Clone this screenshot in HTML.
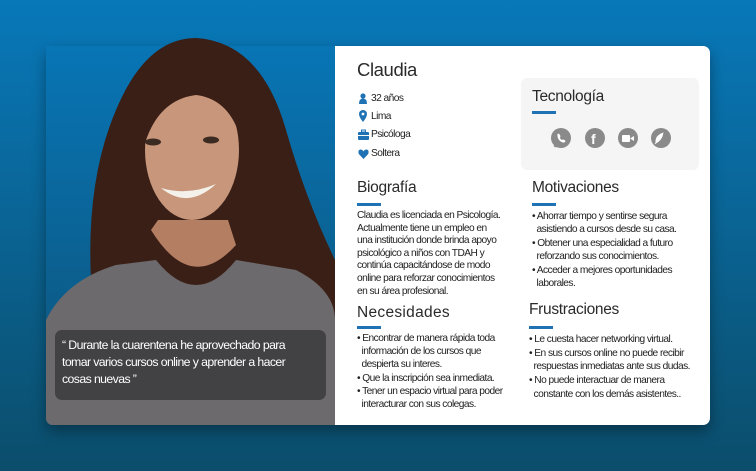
<!DOCTYPE html>
<html><head><meta charset="utf-8"><style>
*{margin:0;padding:0;box-sizing:border-box}
body{width:756px;height:471px;overflow:hidden;font-family:"Liberation Sans",sans-serif;background:linear-gradient(180deg,#0878b9 0%,#0a6596 45%,#0b4d6b 100%);position:relative}
.card{position:absolute;left:46px;top:46px;width:664px;height:379px;border-radius:7px;background:#fff;box-shadow:0 6px 14px rgba(0,0,0,.35)}
.photo{position:absolute;left:46px;top:30px;width:289px;height:395px;overflow:hidden;border-bottom-left-radius:7px}
.t{position:absolute;color:#222;white-space:nowrap;letter-spacing:-.55px}
h2{position:absolute;font-weight:normal;font-size:15.5px;color:#2a2a2a;letter-spacing:-.3px;white-space:nowrap}
.ul{position:absolute;width:24px;height:3px;background:#1f72b3}
.b{font-size:10.2px;line-height:12.6px}
.q{position:absolute;left:55px;top:330px;width:271px;height:70px;border-radius:7px;background:rgba(55,55,58,.8);color:#fff;font-size:12.3px;line-height:17px;padding:7px 0 0 7px;letter-spacing:-.6px}
.ic{position:absolute;width:20px;height:20px;border-radius:50%;background:#8a8a8a;top:128px}
</style></head><body>
<div class="card"></div>
<div class="photo">
<svg width="289" height="395" viewBox="0 0 289 395">
<defs><linearGradient id="bg" x1="0" y1="0" x2="0" y2="1"><stop offset="0" stop-color="#0875b5"/><stop offset=".6" stop-color="#0b6090"/><stop offset="1" stop-color="#0d5477"/></linearGradient></defs>
<rect y="16" width="289" height="379" fill="url(#bg)"/>
<path d="M40 395 L45 250 Q40 150 70 80 Q100 8 150 8 Q215 12 240 100 Q260 170 289 230 L289 395Z" fill="#3a1f17"/>
<path d="M0 395 L0 290 Q20 250 70 235 L110 230 Q150 280 190 230 L250 240 Q289 260 289 290 L289 395Z" fill="#6d6a6d"/>
<path d="M105 200 Q145 265 190 215 L182 190 L112 190Z" fill="#b47e62"/>
<ellipse cx="146" cy="120" rx="47" ry="70" fill="#c8967a"/>
<path d="M97 120 Q100 40 150 38 Q200 42 198 125 Q190 70 150 65 Q110 70 97 120Z" fill="#3a1f17"/>
<ellipse cx="107" cy="112" rx="8" ry="3.5" fill="#3a2a22"/><ellipse cx="165" cy="110" rx="8" ry="3.5" fill="#3a2a22"/>
<path d="M115 158 Q142 180 170 154 Q142 166 115 158Z" fill="#f4f0ea"/>
</svg>
</div>
<div class="q">“ Durante la cuarentena he aprovechado para<br>tomar varios cursos online y aprender a hacer<br>cosas nuevas ”</div>

<div class="t" style="left:357px;top:59px;font-size:18.5px;color:#2a2a2a;letter-spacing:-.4px">Claudia</div>
<svg style="position:absolute;left:358px;top:93px" width="12" height="70">
<circle cx="5" cy="3" r="2.6" fill="#1f72b3"/><path d="M1 11 Q1 5.5 5 5.5 Q9 5.5 9 11Z" fill="#1f72b3"/>
<path d="M5 29 Q1 24 1 21 A4 4 0 0 1 9 21 Q9 24 5 29Z" fill="#1f72b3"/><circle cx="5" cy="21" r="1.4" fill="#fff"/>
<rect x="0" y="39" width="11" height="8" rx="1" fill="#1f72b3"/><rect x="3.5" y="37" width="4" height="2" fill="none" stroke="#1f72b3"/><rect x="0" y="42" width="11" height="1" fill="#fff"/>
<path d="M5.5 66 L0.8 61 Q-0.5 57 2.5 56.5 Q4.5 56.5 5.5 58.5 Q6.5 56.5 8.5 56.5 Q11.5 57 10.2 61Z" fill="#1f72b3"/>
</svg>
<div class="t b" style="left:371px;top:93px">32 años</div>
<div class="t b" style="left:371px;top:111px">Lima</div>
<div class="t b" style="left:371px;top:129px">Psicóloga</div>
<div class="t b" style="left:371px;top:148px">Soltera</div>

<div style="position:absolute;left:521px;top:78px;width:178px;height:92px;background:#f5f5f5;border-radius:6px"></div>
<h2 style="left:532px;top:88px">Tecnología</h2><div class="ul" style="left:532px;top:111px"></div>
<div class="ic" style="left:551px"></div><div class="ic" style="left:585px"></div><div class="ic" style="left:618px"></div><div class="ic" style="left:651px"></div>
<svg style="position:absolute;left:551px;top:128px" width="120" height="22">
<path d="M4 19 L5.5 15" stroke="#8a8a8a" stroke-width="3"/>
<path d="M6.5 6 Q8 5 9 7 L9.5 8.5 Q8.5 9.5 9.5 11 Q11 12.5 12 11.5 L13.5 12 Q15 13 14 14 Q12 15.5 9 13 Q6 10.5 6.5 6Z" fill="#fff"/>
<text x="40" y="16" font-family="Liberation Sans" font-weight="bold" font-size="14" fill="#fff">f</text>
<rect x="71" y="7" width="8" height="7" rx="1" fill="#fff"/><path d="M79 10.5 L83 8 L83 13Z" fill="#fff"/>
<path d="M105 15 Q104 8 112 5 Q111 12 105 15Z M104 16 L108 10" fill="#fff" stroke="#fff" stroke-width=".8"/>
</svg>

<h2 style="left:357px;top:179px">Biografía</h2><div class="ul" style="left:357px;top:203px"></div>
<div class="t b" style="left:357px;top:210px">Claudia es licenciada en Psicología.<br>Actualmente tiene un empleo en<br>una institución donde brinda apoyo<br>psicológico a niños con TDAH y<br>continúa capacitándose de modo<br>online para reforzar conocimientos<br>en su área profesional.</div>

<h2 style="left:357px;top:304px;letter-spacing:.3px">Necesidades</h2><div class="ul" style="left:357px;top:326px"></div>
<div class="t b" style="left:357px;top:332px;line-height:13.2px">• Encontrar de manera rápida toda<br>&nbsp;&nbsp;información de los cursos que<br>&nbsp;&nbsp;despierta su interes.<br>• Que la inscripción sea inmediata.<br>• Tener un espacio virtual para poder<br>&nbsp;&nbsp;interacturar con sus colegas.</div>

<h2 style="left:532px;top:179px">Motivaciones</h2><div class="ul" style="left:532px;top:203px"></div>
<div class="t b" style="left:532px;top:210px;line-height:13.4px">• Ahorrar tiempo y sentirse segura<br>&nbsp;&nbsp;asistiendo a cursos desde su casa.<br>• Obtener una especialidad a futuro<br>&nbsp;&nbsp;reforzando sus conocimientos.<br>• Acceder a mejores oportunidades<br>&nbsp;&nbsp;laborales.</div>

<h2 style="left:529px;top:301px">Frustraciones</h2><div class="ul" style="left:529px;top:326px"></div>
<div class="t b" style="left:529px;top:333px;line-height:13.7px">• Le cuesta hacer networking virtual.<br>• En sus cursos online no puede recibir<br>&nbsp;&nbsp;respuestas inmediatas ante sus dudas.<br>• No puede interactuar de manera<br>&nbsp;&nbsp;constante con los demás asistentes..</div>
</body></html>
